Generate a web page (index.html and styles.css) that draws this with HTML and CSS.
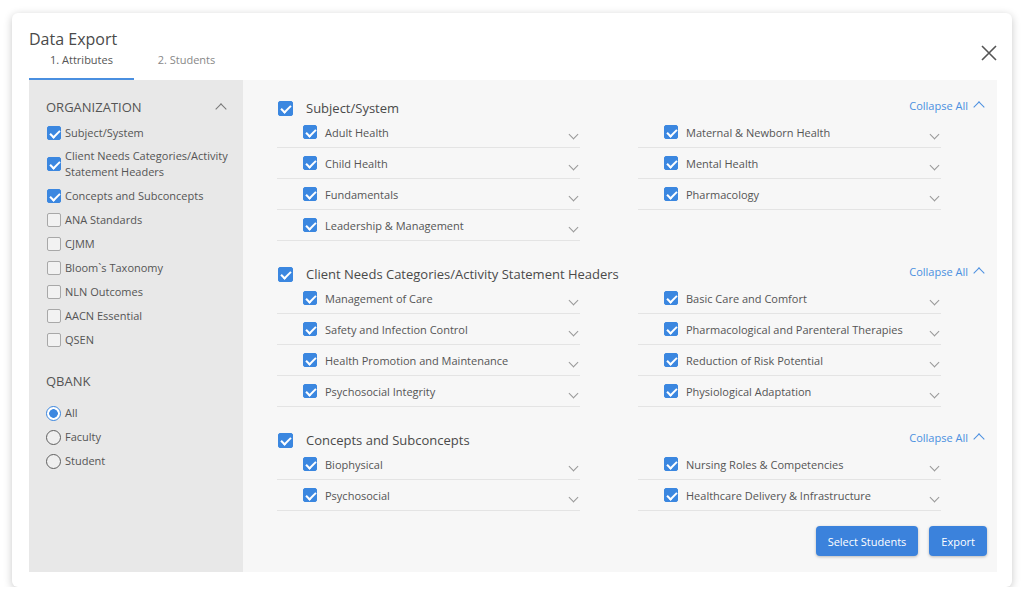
FILE: index.html
```html
<!DOCTYPE html>
<html lang="en">
<head>
    <meta charset="UTF-8">
    <meta name="viewport" content="width=device-width, initial-scale=1.0">
    <title>Data Export</title>
    <link rel="stylesheet" href="styles.css">
</head>
<body>
    <div class="modal">
        <div class="modal-head">
            <div>
                <h1 class="title">Data Export</h1>
                <div class="tabs">
                    <span class="tab active">1. Attributes</span>
                    <span class="tab">2. Students</span>
                </div>
            </div>
            <button class="close" aria-label="Close">
                <svg width="16" height="16" viewBox="0 0 16 16"><path d="M1 1 L15 15 M15 1 L1 15" stroke="#555" stroke-width="1.6" fill="none"/></svg>
            </button>
        </div>

        <div class="panel">
            <!-- sidebar -->
            <div class="sidebar">
                <div class="side-head">
                    <span>ORGANIZATION</span>
                    <span class="chev up"></span>
                </div>
                <ul class="side-list">
                    <li><span class="cb on"></span>Subject/System</li>
                    <li class="two"><span class="cb on"></span>Client Needs Categories/Activity Statement Headers</li>
                    <li><span class="cb on"></span>Concepts and Subconcepts</li>
                    <li><span class="cb"></span>ANA Standards</li>
                    <li><span class="cb"></span>CJMM</li>
                    <li><span class="cb"></span>Bloom`s Taxonomy</li>
                    <li><span class="cb"></span>NLN Outcomes</li>
                    <li><span class="cb"></span>AACN Essential</li>
                    <li><span class="cb"></span>QSEN</li>
                </ul>
                <div class="side-head qbank">QBANK</div>
                <ul class="side-list radios">
                    <li><span class="radio on"></span>All</li>
                    <li><span class="radio"></span>Faculty</li>
                    <li><span class="radio"></span>Student</li>
                </ul>
            </div>

            <!-- main -->
            <div class="main">
                <div class="section">
                    <div class="sec-head">
                        <span class="cb big on"></span>
                        <span class="sec-title">Subject/System</span>
                        <span class="collapse">Collapse All <span class="chev up blue"></span></span>
                    </div>
                    <div class="grid">
                        <div class="row"><span class="cb on"></span>Adult Health<span class="chev"></span></div>
                        <div class="row"><span class="cb on"></span>Maternal &amp; Newborn Health<span class="chev"></span></div>
                        <div class="row"><span class="cb on"></span>Child Health<span class="chev"></span></div>
                        <div class="row"><span class="cb on"></span>Mental Health<span class="chev"></span></div>
                        <div class="row"><span class="cb on"></span>Fundamentals<span class="chev"></span></div>
                        <div class="row"><span class="cb on"></span>Pharmacology<span class="chev"></span></div>
                        <div class="row"><span class="cb on"></span>Leadership &amp; Management<span class="chev"></span></div>
                    </div>
                </div>

                <div class="section">
                    <div class="sec-head">
                        <span class="cb big on"></span>
                        <span class="sec-title">Client Needs Categories/Activity Statement Headers</span>
                        <span class="collapse">Collapse All <span class="chev up blue"></span></span>
                    </div>
                    <div class="grid">
                        <div class="row"><span class="cb on"></span>Management of Care<span class="chev"></span></div>
                        <div class="row"><span class="cb on"></span>Basic Care and Comfort<span class="chev"></span></div>
                        <div class="row"><span class="cb on"></span>Safety and Infection Control<span class="chev"></span></div>
                        <div class="row"><span class="cb on"></span>Pharmacological and Parenteral Therapies<span class="chev"></span></div>
                        <div class="row"><span class="cb on"></span>Health Promotion and Maintenance<span class="chev"></span></div>
                        <div class="row"><span class="cb on"></span>Reduction of Risk Potential<span class="chev"></span></div>
                        <div class="row"><span class="cb on"></span>Psychosocial Integrity<span class="chev"></span></div>
                        <div class="row"><span class="cb on"></span>Physiological Adaptation<span class="chev"></span></div>
                    </div>
                </div>

                <div class="section">
                    <div class="sec-head">
                        <span class="cb big on"></span>
                        <span class="sec-title">Concepts and Subconcepts</span>
                        <span class="collapse">Collapse All <span class="chev up blue"></span></span>
                    </div>
                    <div class="grid">
                        <div class="row"><span class="cb on"></span>Biophysical<span class="chev"></span></div>
                        <div class="row"><span class="cb on"></span>Nursing Roles &amp; Competencies<span class="chev"></span></div>
                        <div class="row"><span class="cb on"></span>Psychosocial<span class="chev"></span></div>
                        <div class="row"><span class="cb on"></span>Healthcare Delivery &amp; Infrastructure<span class="chev"></span></div>
                    </div>
                </div>

                <div class="actions">
                    <button class="btn">Select Students</button>
                    <button class="btn">Export</button>
                </div>
            </div>
        </div>
    </div>
</body>
</html>
```

FILE: styles.css
```css
* {
    box-sizing: border-box;
}
body {
    margin: 0;
    background-color: #ffffff;
    font-family: "Open Sans", "Liberation Sans", sans-serif;
    color: #555;
}

.modal {
    width: 1000px;
    height: 574px;
    margin: 13px 0 0 12px;
    padding: 0 15px 15px 17px;
    background: #fff;
    border-radius: 6px;
    box-shadow: 0 2px 8px rgba(0, 0, 0, 0.22);
    display: flex;
    flex-direction: column;
}

/* header */
.modal-head {
    height: 67px;
    display: flex;
    justify-content: space-between;
    padding-top: 15px;
}
.title {
    margin: 0;
    font-size: 16px;
    font-weight: 400;
    line-height: 22px;
    color: #4a4a4a;
}
.tabs {
    display: flex;
}
.tab {
    width: 105px;
    text-align: center;
    font-size: 11px;
    line-height: 16px;
    padding: 2px 0 10px;
    color: #888;
    border-bottom: 2px solid transparent;
}
.tab.active {
    color: #555;
    border-bottom-color: #4a8fe0;
}
.close {
    background: none;
    border: none;
    padding: 0;
    margin-top: 17px;
    width: 16px;
    height: 16px;
    cursor: pointer;
}

/* panel */
.panel {
    flex: 1;
    display: flex;
}
.sidebar {
    width: 214px;
    background: #e8e8e8;
    padding: 18px 10px 0 17px;
}
.side-head {
    display: flex;
    justify-content: space-between;
    align-items: center;
    font-size: 13px;
    line-height: 18px;
    color: #555;
}
.side-head.qbank {
    margin-top: 20px;
}
.side-list {
    list-style: none;
    margin: 5px 0 0;
    padding: 0;
}
.side-list li {
    display: flex;
    align-items: center;
    font-size: 11px;
    line-height: 16px;
    padding: 4px 0;
    color: #555;
}
.side-list li.two {
    padding: 3px 0 4px;
}
.side-list li .cb {
    margin-right: 4px;
}
.radios {
    margin-top: 11px;
}

/* checkboxes */
.cb {
    flex: none;
    position: relative;
    display: inline-block;
    width: 14px;
    height: 14px;
    margin-left: 1px;
    border: 1px solid #a8a8a8;
    border-radius: 2px;
    background: #f2f2f2;
}
.cb.on {
    background: #3b87e0;
    border-color: #3b87e0;
}
.cb.on::after {
    content: "";
    position: absolute;
    left: 4px;
    top: 1px;
    width: 4px;
    height: 8px;
    border-right: 2px solid #fff;
    border-bottom: 2px solid #fff;
    transform: rotate(45deg);
}
.cb.big {
    width: 15px;
    height: 15px;
}

.radio {
    flex: none;
    display: inline-block;
    width: 15px;
    height: 15px;
    margin-right: 4px;
    border: 1.3px solid #5f5f5f;
    border-radius: 50%;
    background: #efefef;
}
.radio.on {
    border-color: #3b87e0;
    background: radial-gradient(circle, #3b87e0 0 4px, #fff 4.6px);
}

/* chevrons */
.chev {
    flex: none;
    display: inline-block;
    width: 7px;
    height: 7px;
    border-right: 1px solid #999;
    border-bottom: 1px solid #999;
    transform: rotate(45deg);
}
.chev.up {
    transform: rotate(-135deg);
    width: 8px;
    height: 8px;
    border-color: #777;
    margin-top: 4px;
    margin-right: 8px;
}
.chev.blue {
    border-color: #4a8fe0;
    margin-left: 7px;
    margin-right: 4px;
}

/* main */
.main {
    flex: 1;
    background: #f7f7f7;
    padding: 19px 10px 16px 34px;
    display: flex;
    flex-direction: column;
}
.section + .section {
    margin-top: 24px;
}
.sec-head {
    display: flex;
    align-items: center;
    height: 18px;
}
.sec-head .cb {
    margin-left: 1px;
}
.sec-title {
    font-size: 13px;
    color: #4a4a4a;
    margin-left: 13px;
    flex: 1;
}
.collapse {
    display: flex;
    align-items: center;
    font-size: 11px;
    color: #4a8fe0;
    margin-top: -6px;
}
.grid {
    display: grid;
    grid-template-columns: 303px 303px;
    column-gap: 58px;
}
.row {
    display: flex;
    align-items: center;
    height: 31px;
    padding: 0 3px 0 26px;
    border-bottom: 1px solid #e4e4e4;
    font-size: 11px;
    color: #555;
}
.row .cb {
    margin: 0 8px 0 0;
}
.row .chev {
    margin-left: auto;
    margin-top: 4px;
}

/* buttons */
.actions {
    margin-top: auto;
    display: flex;
    justify-content: flex-end;
    gap: 11px;
}
.btn {
    height: 30px;
    padding: 0 12px;
    background: #3b82dc;
    color: #fff;
    border: none;
    border-radius: 4px;
    font-family: inherit;
    font-size: 11px;
    box-shadow: 0 1px 3px rgba(0, 0, 0, 0.25);
    cursor: pointer;
}
```
